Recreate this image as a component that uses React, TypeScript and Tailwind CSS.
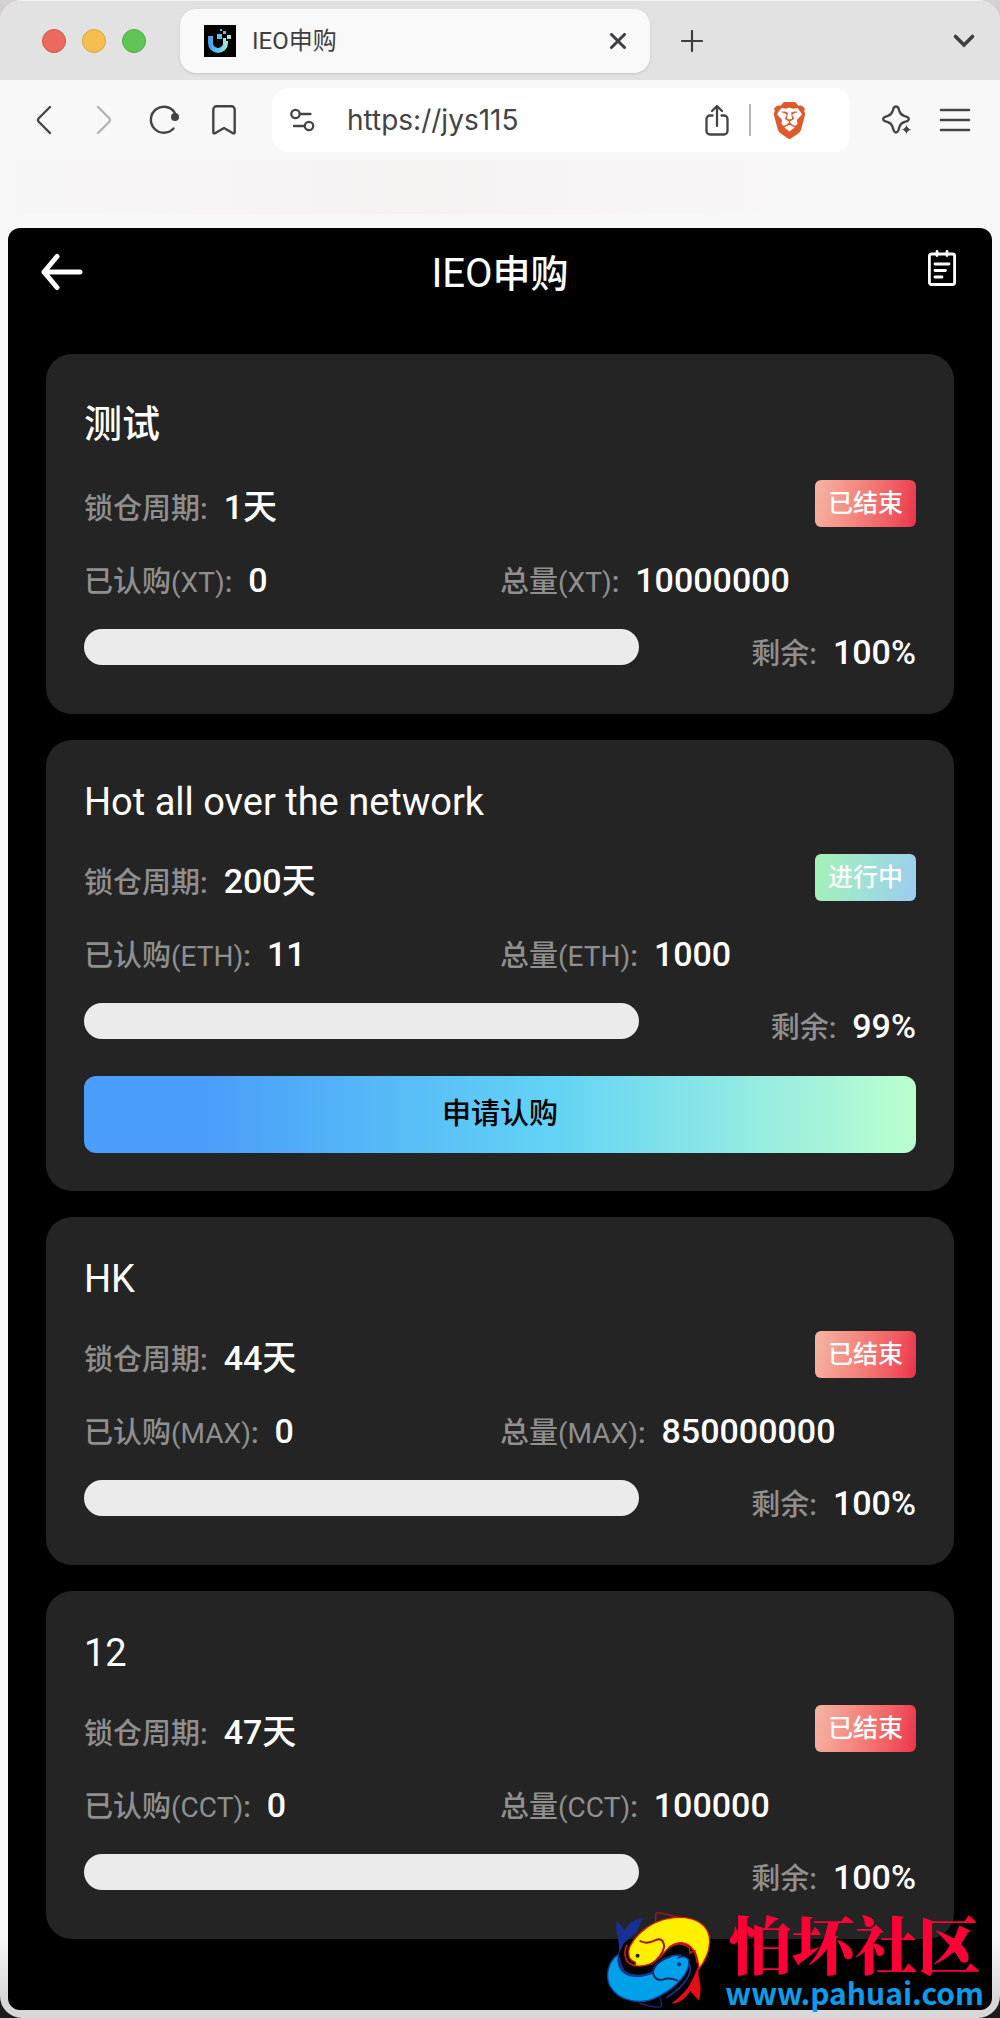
import { FC } from "react";
import { SiBrave } from "react-icons/si";

interface IProject {
  id: number;
  name: string;
  symbol: string;
  days: number;
  sold: string;
  total: string;
  remain: number;
  active: boolean;
  tallTitle?: boolean;
}

const projects: IProject[] = [
  { id: 1, name: "测试", symbol: "XT", days: 1, sold: "0", total: "10000000", remain: 100, active: false, tallTitle: true },
  { id: 2, name: "Hot all over the network", symbol: "ETH", days: 200, sold: "11", total: "1000", remain: 99, active: true },
  { id: 3, name: "HK", symbol: "MAX", days: 44, sold: "0", total: "850000000", remain: 100, active: false },
  { id: 4, name: "12", symbol: "CCT", days: 47, sold: "0", total: "100000", remain: 100, active: false },
];

const Favicon: FC = () => (
  <svg width="32" height="32" viewBox="0 0 32 32" aria-hidden="true">
    <defs>
      <linearGradient id="fav" x1="0" x2="1" y1="0" y2="0">
        <stop offset="0" stopColor="#4a94f0" />
        <stop offset="0.6" stopColor="#68cbe8" />
        <stop offset="1" stopColor="#a6f3d0" />
      </linearGradient>
    </defs>
    <path d="M0 0h32v32H0z" fill="#000" />
    <path d="M4 11h5v7a5 5 0 0 0 10 0v-2h5v2a10 10 0 0 1-20 0z" fill="url(#fav)" />
    <path d="M13 9h5v5h-5zM19 6h3v3h-3zM16 4h2v2h-2z" fill="#62bfe6" />
    <path d="M23 10h4v4h-4zM19 13h3v3h-3z" fill="#9cecd0" />
  </svg>
);

const TabBar: FC = () => (
  <div className="flex h-20 items-center border-t border-[#f4f2f2] bg-[#e2e2e2] pr-6 pl-[42px] text-[#3f3f41]">
    <div className="flex gap-4">
      <button aria-label="Close window" className="size-6 rounded-full border border-[#d4544b] bg-[#ec695f]" />
      <button aria-label="Minimize" className="size-6 rounded-full border border-[#dba53c] bg-[#f5bf4f]" />
      <button aria-label="Zoom" className="size-6 rounded-full border border-[#4fae43] bg-[#60c554]" />
    </div>
    <div className="ml-[34px] flex h-16 w-[470px] items-center rounded-2xl bg-[#f9f9f9] px-6 shadow-sm">
      <Favicon />
      <span className="ml-4 flex-1 text-[24px]">IEO申购</span>
      <button aria-label="Close tab">
        <svg width="16" height="16" viewBox="0 0 16 16" fill="none" stroke="currentColor" strokeWidth="3" strokeLinecap="round">
          <path d="M1.5 1.5l13 13M14.5 1.5l-13 13" />
        </svg>
      </button>
    </div>
    <button aria-label="New tab" className="ml-[31px]">
      <svg width="22" height="22" viewBox="0 0 22 22" fill="none" stroke="currentColor" strokeWidth="2.2" strokeLinecap="round">
        <path d="M11 1v20M1 11h20" />
      </svg>
    </button>
    <button aria-label="Search tabs" className="ml-auto">
      <svg width="24" height="16" viewBox="0 0 24 16" fill="none" stroke="currentColor" strokeWidth="3.6" strokeLinecap="round">
        <path d="M3.500 3.500l8.500 8.500 8.500-8.500" />
      </svg>
    </button>
  </div>
);

const Toolbar: FC = () => (
  <div className="flex h-20 items-center py-2 pr-7 pl-8 text-[#444446]">
    <div className="flex w-60 shrink-0 items-center">
      <button aria-label="Back">
        <svg width="24" height="32" viewBox="0 0 24 32" fill="none" stroke="currentColor" strokeWidth="2.4" strokeLinecap="round" strokeLinejoin="round">
          <path d="M18 3L6.500 14.500q-1.200 1.500 0 3L18 29" />
        </svg>
      </button>
      <button aria-label="Forward" className="ml-9 text-[#b4b4b4]">
        <svg width="24" height="32" viewBox="0 0 24 32" fill="none" stroke="currentColor" strokeWidth="2.4" strokeLinecap="round" strokeLinejoin="round">
          <path d="M6 3l11.500 11.500q1.200 1.500 0 3L6 29" />
        </svg>
      </button>
      <button aria-label="Reload" className="ml-8">
        <svg width="32" height="32" viewBox="0 0 32 32" fill="none" stroke="currentColor" strokeWidth="2.4" strokeLinecap="round">
          <path d="M25.500 24.500A13 13 0 1 1 27 9" />
          <circle cx="27" cy="13" r="4" fill="currentColor" stroke="none" />
        </svg>
      </button>
      <button aria-label="Bookmark" className="ml-7">
        <svg width="32" height="32" viewBox="0 0 32 32" fill="none" stroke="currentColor" strokeWidth="2.4" strokeLinejoin="round">
          <path d="M8.500 2.300h15a3.200 3.200 0 0 1 3.200 3.200V28q0 2-1.800 1.200L16 24l-8.900 5.200Q5.300 30 5.300 28V5.500a3.200 3.200 0 0 1 3.200-3.200z" />
        </svg>
      </button>
    </div>
    <div className="flex h-16 min-w-0 flex-1 items-center rounded-2xl bg-white pr-[42px] pl-[17px]">
      <button aria-label="Site information">
        <svg width="26" height="26" viewBox="0 0 26 26" fill="none" stroke="currentColor" strokeWidth="2.3" strokeLinecap="round">
          <circle cx="6.500" cy="7" r="4.200" />
          <path d="M11 7h10.500M5 19h10.500" />
          <circle cx="20" cy="19" r="4.200" />
        </svg>
      </button>
      <input
        aria-label="Address"
        className="ml-8 min-w-0 flex-1 bg-transparent font-['Inter',sans-serif] text-[28px] outline-none"
        defaultValue="https://jys115"
      />
      <button aria-label="Share">
        <svg width="24" height="32" viewBox="0 0 24 32" fill="none" stroke="currentColor" strokeWidth="2.3" strokeLinecap="round" strokeLinejoin="round">
          <path d="M7.500 11.500H5a3.500 3.500 0 0 0-3.500 3.500v12A3.500 3.500 0 0 0 5 30.500h14a3.500 3.500 0 0 0 3.500-3.500V15a3.500 3.500 0 0 0-3.500-3.500h-2.500M12 22V2.500M7 7l5-5 5 5" />
        </svg>
      </button>
      <span className="ml-5 h-8 w-0.5 bg-[#b5b5b5]" />
      <button aria-label="Shields" className="ml-5 text-[#e0592c]">
        <SiBrave size={37} />
      </button>
    </div>
    <button aria-label="Assistant" className="ml-8">
      <svg width="32" height="32" viewBox="0 0 32 32" fill="none" stroke="currentColor" strokeWidth="2.300" strokeLinejoin="round">
        <path d="M14 2.500c2.600 0 2.600 2 3.400 4.600 1 3 1.800 3.800 4.800 4.800 2.600.8 4.600.8 4.600 3.100s-2 2.300-4.600 3.100c-3 1-3.800 1.800-4.800 4.800-.8 2.600-.8 5.600-3.400 5.600s-2.600-3-3.400-5.600c-1-3-1.800-3.800-4.800-4.800C3.200 17.300 1.200 17.300 1.200 15s2-2.300 4.600-3.100c3-1 3.800-1.800 4.800-4.800.8-2.600.8-4.600 3.400-4.600z" />
        <path d="M24.500 19.500c1 4 2 5 5.700 6-3.700 1-4.700 2-5.700 6-1-4-2-5-5.700-6 3.700-1 4.700-2 5.700-6z" fill="currentColor" stroke="#f9f8f8" strokeWidth="1" />
      </svg>
    </button>
    <button aria-label="Menu" className="ml-6">
      <svg width="34" height="26" viewBox="0 0 34 26" fill="none" stroke="currentColor" strokeWidth="2.500" strokeLinecap="round">
        <path d="M3 3h28M3 13h28M3 23h28" />
      </svg>
    </button>
  </div>
);

const Label: FC<{ text: string; symbol?: string }> = ({ text, symbol }) => (
  <span className="mr-4 text-[29px] leading-none text-[#8f8f8f]">
    {text}
    {symbol && <span className="text-[28px] leading-none font-normal">({symbol})</span>}:
  </span>
);

const ProjectCard: FC<{ project: IProject }> = ({ project }) => (
  <article className="rounded-[26px] bg-[#242424] p-[38px] text-white">
    <h2 className={project.tallTitle ? "mb-6 text-[38px] leading-16 font-medium" : "mb-7 text-[38px] leading-12"}>
      {project.name}
    </h2>
    <div className="flex items-start justify-between">
      <p className="text-[34px] leading-[54px] font-medium">
        <Label text="锁仓周期" />
        {project.days}天
      </p>
      {project.active ? (
        <span className="rounded-md bg-linear-100 from-[#a3f3b6] to-[#9dcdf0] px-[13px] text-[25px] leading-[47px] font-medium">进行中</span>
      ) : (
        <span className="rounded-md bg-linear-100 from-[#f5b5a4] to-[#eb304b] px-[13px] text-[25px] leading-[47px] font-medium">已结束</span>
      )}
    </div>
    <div className="mt-[22px] grid grid-cols-2 text-[34px] leading-[48px] font-medium">
      <p>
        <Label text="已认购" symbol={project.symbol} />
        {project.sold}
      </p>
      <p>
        <Label text="总量" symbol={project.symbol} />
        {project.total}
      </p>
    </div>
    <div className="mt-[25px] flex items-start justify-between">
      <div
        role="progressbar"
        aria-label={project.name}
        aria-valuenow={100 - project.remain}
        className="h-9 w-2/3 rounded-full bg-[#ebebeb]"
      />
      <p className="text-[34px] leading-[47px] font-medium">
        <Label text="剩余" />
        {project.remain}%
      </p>
    </div>
    {project.active && (
      <button className="mt-[26px] h-[77px] w-full rounded-xl bg-linear-90 from-[#4a9dfa] from-14% via-[#65d5f4] via-58% to-[#bbffcf] text-[29px] font-medium text-black">
        申请认购
      </button>
    )}
  </article>
);

// two koi circling each other
const KoiLogo: FC = () => (
  <svg width="108" height="100" viewBox="20 55 325 300" aria-hidden="true">
    {/* fins and tails */}
    <path d="M172 96L173 65Q180 61 200 66L250 78" fill="none" stroke="#b5121c" strokeWidth="4" />
    <path d="M122 334Q150 346 184 347L190 342L187 318" fill="none" stroke="#1a2c7c" strokeWidth="4" />
    <path d="M60 192Q66 160 56 128Q51 106 56 88Q66 100 80 116Q92 84 138 78Q122 98 117 120Q100 134 76 156z" fill="#1a2f94" />
    <path d="M300 224Q286 262 270 288Q250 314 220 336Q256 334 276 298Q288 310 303 328Q312 290 303 262z" fill="#e60d18" />
    {/* dark gap between the bodies */}
    <path d="M58 200C66 165 100 140 130 130L240 150C280 150 302 180 302 215C290 265 250 300 215 315L160 260C130 275 62 270 58 200z" fill="#000" />
    <path d="M268 210Q285 225 270 256Q250 292 205 318" fill="none" stroke="#1b348c" strokeWidth="5" />
    <path d="M86 160Q74 184 86 208Q96 220 112 222" fill="none" stroke="#d31a1c" strokeWidth="5" />
    {/* yellow koi */}
    <path d="M92 190C82 160 140 88 222 78C290 70 336 100 335 150C334 185 318 212 302 232C302 194 284 155 250 153C222 154 208 170 192 190C172 214 140 228 108 222C112 218 116 214 108 210C98 206 92 198 92 190z" fill="#fff000" stroke="#e21219" strokeWidth="4" />
    <path d="M124 147Q142 158 165 148Q196 132 198 165Q192 196 158 218" fill="none" stroke="#a80f16" strokeWidth="6" />
    <path d="M214 166Q246 146 274 168L276 184L290 178L298 214" fill="none" stroke="#c9141a" strokeWidth="5" />
    <circle cx="118" cy="192" r="6" fill="#101c38" />
    {/* blue koi */}
    <path d="M60 188C30 208 20 250 34 282C60 330 130 345 186 312C238 286 276 240 272 208C270 198 262 194 248 196L240 198L248 190C212 190 172 208 164 240C140 256 100 260 78 244C60 230 56 210 60 188z" fill="#00a1ea" stroke="#173b98" strokeWidth="4" />
    <path d="M240 268Q212 256 194 264Q170 270 163 240Q172 208 218 194" fill="none" stroke="#152560" strokeWidth="6" />
    <path d="M62 196Q66 224 78 240Q110 262 162 244" fill="none" stroke="#1b348c" strokeWidth="6" />
    <circle cx="243" cy="218" r="6" fill="#10306c" />
  </svg>
);

const App: FC = () => {
  return (
    <div className="bg-linear-to-b from-[#d6d2d2] to-[#1c1c1c] font-['Roboto','Noto_Sans_CJK_SC',sans-serif]">
      <div className="relative min-h-screen overflow-hidden rounded-[22px] bg-linear-to-b from-[#f9f8f8] from-96% to-[#d8d8d8] to-99%">
        <TabBar />
        <Toolbar />
        <div className="mx-4 h-[54px] w-4/5 bg-linear-to-r from-[#f8f7f7] via-[#f5f2f2] to-[#f9f8f8]" />
        <main className="mx-2 mt-[14px] mb-2 rounded-xl bg-black pb-[71px] text-white">
          <header className="grid h-[88px] grid-cols-[1fr_auto_1fr] items-center px-8">
            <button aria-label="返回" className="justify-self-start">
              <svg width="44" height="40" viewBox="0 0 44 40" fill="none" stroke="currentColor" strokeWidth="5" strokeLinecap="round" strokeLinejoin="round">
                <path d="M17 4.500L4 20l13 15.500M4 20h36" />
              </svg>
            </button>
            <h1 className="pt-1 text-[40px] leading-12">IEO<span className="text-[38px] font-medium">申购</span></h1>
            <button aria-label="认购记录" className="mb-2 justify-self-end">
              <svg width="36" height="36" viewBox="0 0 36 36" fill="none" stroke="currentColor" strokeWidth="2.800" strokeLinecap="round" strokeLinejoin="round">
                <rect x="5.400" y="4" width="25.200" height="30.500" rx="2" />
                <path d="M13 1.500v4M23 1.500v4M11 14h14M11 20.500h10.500M11 27h7" />
              </svg>
            </button>
          </header>
          <section className="mt-[38px] flex flex-col gap-[26px] px-[38px]">
            {projects.map((project) => (
              <ProjectCard key={project.id} project={project} />
            ))}
          </section>
        </main>
        <a href="#" className="absolute right-4 bottom-2 flex items-center gap-3">
          <KoiLogo />
          <span className="flex flex-col items-center font-['Noto_Sans_CJK_SC',sans-serif] font-bold">
            <span className="font-['Noto_Serif_CJK_SC','Noto_Sans_CJK_SC',serif] text-[63px] leading-[64px] font-black text-[#ff0036]">怕坏社区</span>
            <span className="text-[30px] leading-9 text-[#0c9ce8]">www.pahuai.com</span>
          </span>
        </a>
      </div>
    </div>
  );
};

export default App;
